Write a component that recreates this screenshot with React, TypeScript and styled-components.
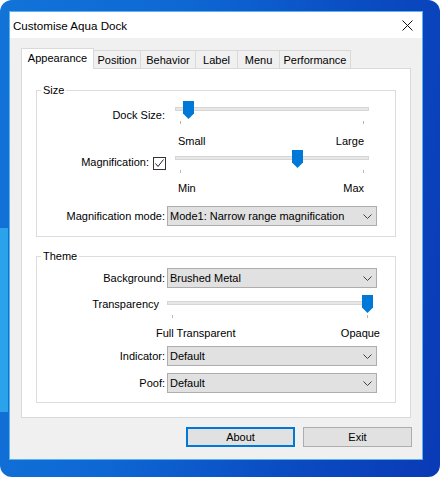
import styled, { createGlobalStyle } from 'styled-components';

const GlobalStyle = createGlobalStyle`
    html, body { margin:0; padding:0; background:#fff; }
    body { font-family:"Liberation Sans", Arial, sans-serif; font-size:11px; color:#000; }
`;

const tabs = [
    { name: 'Appearance', width: 73 },
    { name: 'Position', width: 48 },
    { name: 'Behavior', width: 56 },
    { name: 'Label', width: 43 },
    { name: 'Menu', width: 43 },
    { name: 'Performance', width: 72 },
];

const Chevron = () => (
    <svg width="9" height="5" viewBox="0 0 9 5">
        <polyline points="0.5,0.5 4.5,4.5 8.5,0.5" fill="none" stroke="#404040" strokeWidth="1" />
    </svg>
);

const ThumbIcon = () => (
    <svg width="11" height="18" viewBox="0 0 11 18">
        <path d="M0 0 H11 V12.5 L5.5 18 L0 12.5 Z" fill="#0078d7" />
    </svg>
);

const Slider = ({ value, width }: { value: number; width: number }) => {
    const center = 14 + (width - 28) * value;
    return <SliderBox $w={width}>
        <Track />
        <Ticks><Tick /><Tick /></Ticks>
        <Thumb style={{ left: center - 5.5 }}><ThumbIcon /></Thumb>
    </SliderBox>
}

const Dropdown = ({ value }: { value: string }) => (
    <Select>
        <span>{value}</span>
        <Chevron />
    </Select>
);

const App = () => {
    return <>
        <GlobalStyle />
        <Wallpaper>
            <Window>
                <TitleBar>
                    <Title>Customise Aqua Dock</Title>
                    <CloseButton>
                        <svg width="11" height="11" viewBox="0 0 11 11">
                            <path d="M0.5 0.5 L10.5 10.5 M10.5 0.5 L0.5 10.5" stroke="#111" strokeWidth="1" />
                        </svg>
                    </CloseButton>
                </TitleBar>
                <Body>
                    <TabStrip>
                        {tabs.map((t, i) => <Tab key={t.name} $w={t.width} $active={i === 0}>{t.name}</Tab>)}
                    </TabStrip>
                    <Panel>
                        <Group>
                            <legend>Size</legend>
                            <FieldRow $h={26}>
                                <FieldLabel $pt={9}>Dock Size:</FieldLabel>
                                <Slider value={0.04} width={210} />
                            </FieldRow>
                            <FieldRow $h={23}>
                                <span />
                                <ScaleRow $pt={9} $ml={11} $mr={13}><span>Small</span><span>Large</span></ScaleRow>
                            </FieldRow>
                            <FieldRow $h={26}>
                                <FieldLabel $pt={7}>
                                    Magnification:
                                    <CheckBox>
                                        <svg width="11" height="11" viewBox="0 0 11 11">
                                            <polyline points="1.5,5.5 4,8.5 9.5,1.5" fill="none" stroke="#222" strokeWidth="1" />
                                        </svg>
                                    </CheckBox>
                                </FieldLabel>
                                <Slider value={0.64} width={210} />
                            </FieldRow>
                            <FieldRow $h={31}>
                                <span />
                                <ScaleRow $pt={7} $ml={11} $mr={13}><span>Min</span><span>Max</span></ScaleRow>
                            </FieldRow>
                            <FieldRow $h={20}>
                                <FieldLabel $pt={4}>Magnification mode:</FieldLabel>
                                <Dropdown value="Mode1: Narrow range magnification" />
                            </FieldRow>
                        </Group>
                        <Group $second>
                            <legend>Theme</legend>
                            <FieldRow $h={20}>
                                <FieldLabel $pt={4}>Background:</FieldLabel>
                                <Dropdown value="Brushed Metal" />
                            </FieldRow>
                            <FieldRow $h={26} $mt={6} $cols="122px 222px">
                                <FieldLabel $pt={4}>Transparency</FieldLabel>
                                <Slider value={1} width={222} />
                            </FieldRow>
                            <FieldRow $h={26} $cols="122px 222px">
                                <span />
                                <ScaleRow $pt={7} $ml={-3} $mr={1}><span>Full Transparent</span><span>Opaque</span></ScaleRow>
                            </FieldRow>
                            <FieldRow $h={20}>
                                <FieldLabel $pt={4}>Indicator:</FieldLabel>
                                <Dropdown value="Default" />
                            </FieldRow>
                            <FieldRow $h={20} $mt={7}>
                                <FieldLabel $pt={4}>Poof:</FieldLabel>
                                <Dropdown value="Default" />
                            </FieldRow>
                        </Group>
                    </Panel>
                    <ButtonRow>
                        <Button $default>About</Button>
                        <Button>Exit</Button>
                    </ButtonRow>
                </Body>
            </Window>
        </Wallpaper>
    </>
}

const Wallpaper = styled.div`
    box-sizing:border-box;width:440px;height:477px;padding:11px 0 0 9px;border-radius:12px;overflow:hidden;
    background:
        linear-gradient(180deg, transparent 228px, #2ba3ea 228px, #2ba3ea 412px, transparent 412px) left top / 8px 100% no-repeat,
        linear-gradient(100deg, #1273d8 0%, #0e68d4 35%, #0a4cc2 70%, #0a3ab5 100%);
`

const Window = styled.div`
    box-sizing:border-box;width:414px;height:449px;display:flex;flex-direction:column;
    background:#f0f0f0;border:1px solid #5bb4ec;
`

const TitleBar = styled.div`
    display:flex;align-items:center;justify-content:space-between;height:26px;
    background:#fff;padding-left:3px;
`

const Title = styled.span`
    font-size:11.6px;color:#000;
`

const CloseButton = styled.div`
    width:30px;height:26px;display:flex;align-items:center;justify-content:center;
    svg { display:block; }
`

const Body = styled.div`
    flex:1;display:flex;flex-direction:column;padding:10px 11px 0 11px;
`

const TabStrip = styled.div`
    display:flex;align-items:flex-end;height:20px;
`

const Tab = styled.div<{ $w: number; $active?: boolean }>`
    box-sizing:border-box;width:${({ $w }) => $w}px;height:${({ $active }) => $active ? 21 : 18}px;
    display:flex;align-items:center;justify-content:center;padding-bottom:${({ $active }) => $active ? 2 : 0}px;
    border:1px solid #d9d9d9;border-bottom:none;
    background:${({ $active }) => $active ? '#fff' : '#f0f0f0'};
    position:relative;z-index:${({ $active }) => $active ? 1 : 0};
    margin-bottom:${({ $active }) => $active ? -1 : 0}px;
    & + & { margin-left:-1px; }
`

const Panel = styled.div`
    background:#fff;border:1px solid #d9d9d9;padding:15px 14px 14px 14px;
`

const Group = styled.fieldset<{ $second?: boolean }>`
    margin:${({ $second }) => $second ? 13 : 0}px 0 0 0;min-width:0;
    padding:${({ $second }) => $second ? '5px 0 9px' : '3px 0 10px'};
    border:1px solid #dcdcdc;
    legend { padding:0 2px;margin-left:4px;line-height:13px;font-size:11px; }
`

const FieldRow = styled.div<{ $h: number; $mt?: number; $cols?: string }>`
    display:grid;grid-template-columns:${({ $cols }) => $cols ?? '128px 210px'};
    column-gap:${({ $cols }) => $cols ? 0 : 2}px;
    height:${({ $h }) => $h}px;margin-top:${({ $mt }) => $mt ?? 0}px;
`

const FieldLabel = styled.div<{ $pt: number }>`
    display:flex;justify-content:flex-end;align-items:flex-start;gap:4px;
    padding-top:${({ $pt }) => $pt}px;line-height:13px;white-space:nowrap;
`

const CheckBox = styled.div`
    box-sizing:border-box;width:13px;height:13px;margin-top:1px;margin-right:-1px;
    border:1px solid #333;background:#fff;display:flex;
    svg { display:block; }
`

const ScaleRow = styled.div<{ $pt: number; $ml: number; $mr: number }>`
    display:flex;justify-content:space-between;line-height:13px;white-space:nowrap;
    padding-top:${({ $pt }) => $pt}px;
    margin-left:${({ $ml }) => $ml}px;margin-right:${({ $mr }) => $mr}px;
`

const SliderBox = styled.div<{ $w: number }>`
    position:relative;width:${({ $w }) => $w}px;height:26px;
`

const Track = styled.div`
    box-sizing:border-box;height:4px;margin:7px 8px 0;
    background:#e7e7e7;border:1px solid #d6d6d6;
`

const Ticks = styled.div`
    display:flex;justify-content:space-between;padding:0 13px;margin-top:10px;
`

const Tick = styled.div`
    width:1px;height:3px;background:#b4b4b4;
`

const Thumb = styled.div`
    position:absolute;top:1px;width:11px;height:18px;
    svg { display:block; }
`

const Select = styled.div`
    box-sizing:border-box;height:20px;width:210px;display:flex;align-items:center;justify-content:space-between;
    padding:0 4px 0 2px;background:#e1e1e1;border:1px solid #adadad;white-space:nowrap;
    svg { display:block; }
`

const ButtonRow = styled.div`
    display:flex;justify-content:flex-end;gap:8px;margin:9px -1px 0 0;
`

const Button = styled.button<{ $default?: boolean }>`
    box-sizing:border-box;width:109px;height:20px;padding:0;
    font-family:inherit;font-size:11px;color:#000;background:#e1e1e1;
    border:${({ $default }) => $default ? '2px solid #0078d7' : '1px solid #adadad'};
`

export default App;
